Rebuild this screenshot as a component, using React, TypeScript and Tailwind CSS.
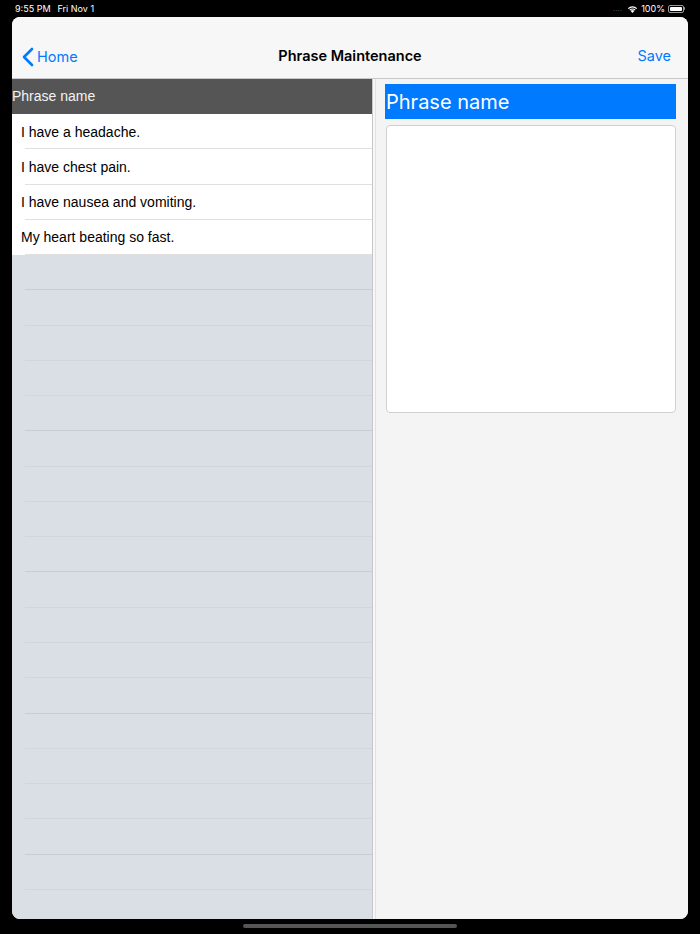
import React from "react";

const phrases = [
  "I have a headache.",
  "I have chest pain.",
  "I have nausea and vomiting.",
  "My heart beating so fast.",
];

const emptyRows = Array.from({ length: 19 }, (_, i) => i);

export default function App() {
  return (
    <div className="relative flex h-[934px] w-[700px] flex-col overflow-hidden bg-black" style={{ fontFamily: "Inter, 'Liberation Sans', sans-serif" }}>
      {/* status bar */}
      <div className="flex h-[17px] shrink-0 items-center justify-between px-[15px] text-[9px] text-white">
        <div className="flex gap-[7px]">
          <span>9:55 PM</span>
          <span>Fri Nov 1</span>
        </div>
        <div className="flex items-center gap-[3px] pr-[0px]">
          <span className="mr-[2px] text-[6px] tracking-[0.5px] text-gray-400">....</span>
          <svg width="11" height="8" viewBox="0 0 11 8">
            <path d="M5.5 8 L3.6 5.9 A2.7 2.7 0 0 1 7.4 5.9 Z" fill="white" />
            <path d="M2.4 4.7 A4.4 4.4 0 0 1 8.6 4.7 L7.8 5.5 A3.3 3.3 0 0 0 3.2 5.5 Z" fill="white" />
            <path d="M0.9 3.2 A6.5 6.5 0 0 1 10.1 3.2 L9.3 4 A5.4 5.4 0 0 0 1.7 4 Z" fill="white" />
          </svg>
          <span>100%</span>
          <div className="flex items-center">
            <div className="flex h-[8px] w-[16px] items-center rounded-[2px] border border-white/60 p-[1px]">
              <div className="h-full w-full rounded-[1px] bg-white" />
            </div>
            <div className="h-[3px] w-[1px] rounded-r bg-white/60" />
          </div>
        </div>
      </div>

      {/* screen */}
      <div className="mx-[12px] flex h-[902px] shrink-0 flex-col overflow-hidden rounded-[8px] bg-[#f4f4f4]">
        {/* nav bar */}
        <div className="relative flex h-[62px] shrink-0 items-end border-b border-[#c8c7cc] bg-[#f7f7f7] pb-[10px]">
          <div className="flex items-center pl-[10px] text-[14.5px] text-[#007aff]">
            <svg width="12" height="20" viewBox="0 0 12 20" className="mr-[3px]">
              <path d="M10 2 L2 10 L10 18" fill="none" stroke="#007aff" strokeWidth="2.6" strokeLinecap="round" strokeLinejoin="round" />
            </svg>
            <span>Home</span>
          </div>
          <div className="absolute bottom-[11px] left-0 right-0 text-center text-[14.5px] font-semibold text-black">Phrase Maintenance</div>
          <div className="ml-auto pb-[1px] pr-[17px] text-[14.5px] text-[#007aff]">Save</div>
        </div>

        <div className="flex min-h-0 flex-1">
          {/* left pane */}
          <div className="flex w-[360px] shrink-0 flex-col bg-[#dadee5]" style={{ fontFamily: "'Liberation Sans', Arial, sans-serif" }}>
            <div className="flex h-[35px] shrink-0 items-center bg-[#555555] text-[14px] text-[#f2f2f2]">Phrase name</div>
            {phrases.map((p) => (
              <div key={p} className="flex h-[35.27px] shrink-0 flex-col bg-white">
                <div className="flex flex-1 items-center pl-[9px] pt-[2px] text-[14px] text-black">{p}</div>
                <div className="ml-[13px] h-px bg-[#e0e0e0]" />
              </div>
            ))}
            {emptyRows.map((i) => (
              <div key={i} className="flex h-[35.27px] shrink-0 flex-col">
                <div className="flex-1" />
                <div className={`ml-[13px] h-px ${i % 4 === 0 ? "bg-[#c9ccd2]" : "bg-[#d2d5dc]"}`} />
              </div>
            ))}
          </div>
          {/* divider */}
          <div className="w-px shrink-0 bg-[#c8c8cc]" />
          <div className="w-[2px] shrink-0 bg-[#f7f7f7]" />
          <div className="w-px shrink-0 bg-[#e2e2e2]" />

          {/* right pane */}
          <div className="flex flex-1 flex-col bg-[#f4f4f4] pl-[9px] pr-[12px] pt-[5px]">
            <div className="flex h-[35px] items-center bg-[#007aff] pl-[1px] text-[20px] text-white">Phrase name</div>
            <div className="mt-[6px] ml-[1px] h-[288px] rounded-[4px] border border-[#d0d0d0] bg-white" />
          </div>
        </div>
      </div>

      {/* home indicator */}
      <div className="flex flex-1 items-center justify-center">
        <div className="mb-[2px] h-[4px] w-[214px] rounded-full bg-[#555555]" />
      </div>
    </div>
  );
}
